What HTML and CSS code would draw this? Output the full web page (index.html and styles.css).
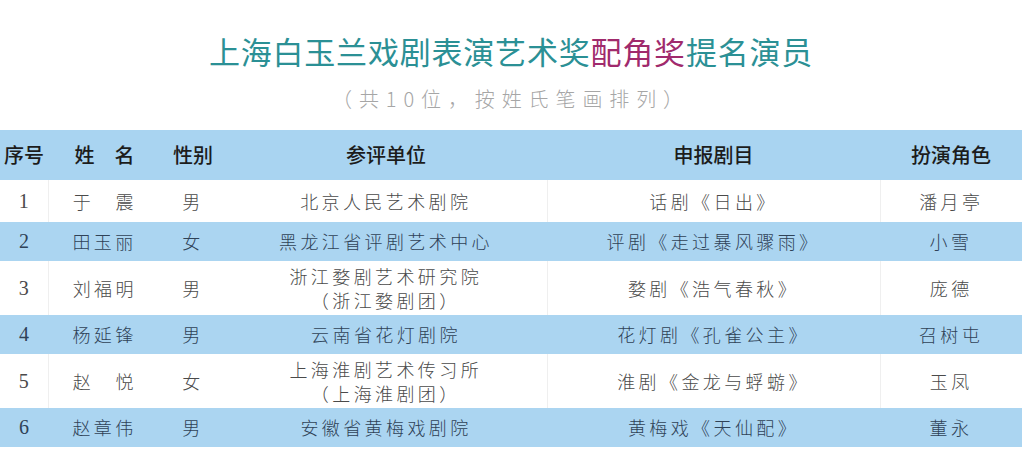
FILE: index.html
```html
<!DOCTYPE html>
<html lang="zh-CN">
<head>
<meta charset="utf-8">
<title>上海白玉兰戏剧表演艺术奖配角奖提名演员</title>
<link rel="stylesheet" href="styles.css">
</head>
<body>
<div class="page">
  <h1 class="title">上海白玉兰戏剧表演艺术奖<span class="accent">配角奖</span>提名演员</h1>
  <p class="subtitle">（共10位，按姓氏笔画排列）</p>
  <table class="list">
    <colgroup>
      <col class="c-no"><col class="c-name"><col class="c-sex"><col class="c-unit"><col class="c-play"><col class="c-role">
    </colgroup>
    <thead>
      <tr class="head">
        <th>序号</th><th>姓　名</th><th>性别</th><th>参评单位</th><th>申报剧目</th><th>扮演角色</th>
      </tr>
    </thead>
    <tbody>
      <tr class="row plain">
        <td class="num">1</td><td>于　震</td><td>男</td><td>北京人民艺术剧院</td><td>话剧《日出》</td><td>潘月亭</td>
      </tr>
      <tr class="row blue">
        <td class="num">2</td><td>田玉丽</td><td>女</td><td>黑龙江省评剧艺术中心</td><td>评剧《走过暴风骤雨》</td><td>小雪</td>
      </tr>
      <tr class="row plain tall">
        <td class="num">3</td><td>刘福明</td><td>男</td><td>浙江婺剧艺术研究院<br>（浙江婺剧团）</td><td>婺剧《浩气春秋》</td><td>庞德</td>
      </tr>
      <tr class="row blue">
        <td class="num">4</td><td>杨延锋</td><td>男</td><td>云南省花灯剧院</td><td>花灯剧《孔雀公主》</td><td>召树屯</td>
      </tr>
      <tr class="row plain tall">
        <td class="num">5</td><td>赵　悦</td><td>女</td><td>上海淮剧艺术传习所<br>（上海淮剧团）</td><td>淮剧《金龙与蜉蝣》</td><td>玉凤</td>
      </tr>
      <tr class="row blue">
        <td class="num">6</td><td>赵章伟</td><td>男</td><td>安徽省黄梅戏剧院</td><td>黄梅戏《天仙配》</td><td>董永</td>
      </tr>
    </tbody>
  </table>
</div>
</body>
</html>
```

FILE: styles.css
```css
* { box-sizing: border-box; }
html, body { margin: 0; padding: 0; background: #ffffff; }
body {
  font-family: "Noto Sans CJK SC", "Noto Sans", sans-serif;
  width: 1027px;
  height: 450px;
  overflow: hidden;
}
.page {
  display: flex;
  flex-direction: column;
  align-items: flex-start;
}
.title {
  margin: 0;
  padding-top: 33px;
  width: 1022px;
  text-align: center;
  font-size: 31px;
  line-height: 36px;
  font-weight: 400;
  letter-spacing: 0.8px;
  color: #2b9095;
  padding-left: 0;
}
.title .accent { color: #a02a6c; }
.subtitle {
  margin: 0;
  margin-top: 17px;
  width: 1022px;
  text-align: center;
  font-size: 20px;
  line-height: 26px;
  letter-spacing: 6.9px;
  color: #a6a6a6;
  font-weight: 300;
  padding-left: 0;
}
.list {
  margin-top: 18px;
  width: 1022px;
  border-collapse: collapse;
  table-layout: fixed;
}
.c-no { width: 48px; }
.c-name { width: 113px; }
.c-sex { width: 64px; }
.c-unit { width: 322px; }
.c-play { width: 333px; }
.c-role { width: 142px; }
.head { height: 50px; background: #a9d4f1; }
.head th {
  font-size: 20px;
  font-weight: 500;
  color: #1c1c1c;
  text-align: center;
  padding: 0;
  line-height: 24px;
}
.row td {
  text-align: center;
  padding: 0;
  font-size: 18px;
  line-height: 24px;
  letter-spacing: 3.4px;
  font-weight: 300;
}
.row td.num {
  font-family: "Liberation Serif", "DejaVu Serif", serif;
  font-size: 20px;
  letter-spacing: 0;
}
.plain { height: 41px; background: #ffffff; color: #4a4a4a; }
.plain.tall { height: 53px; }
.plain td { border-top: 1px solid #ffffff; }
.plain td:nth-child(1),
.plain td:nth-child(4),
.plain td:nth-child(5) { border-right: 1px solid #efefef; }
.blue { height: 40px; background: #abd5f1; color: #2f4257; }
.blue td { border-top: 1px solid #ffffff; }
```
